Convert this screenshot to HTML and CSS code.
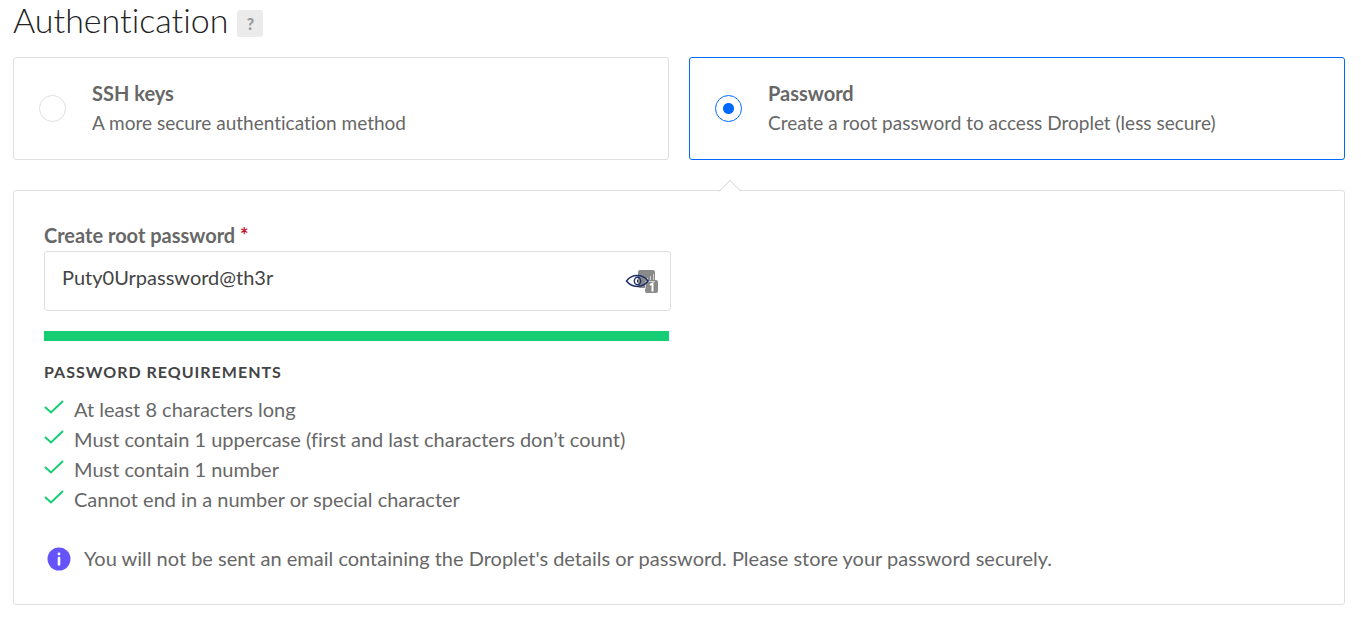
FILE: index.html
```html
<!DOCTYPE html>
<html lang="en">
<head>
<meta charset="utf-8">
<meta name="viewport" content="width=device-width, initial-scale=1">
<title>Authentication</title>
<link rel="stylesheet" href="styles.css">
</head>
<body>
<main class="auth">
  <header class="auth-header">
    <h1 class="auth-title">Authentication</h1>
    <button class="help" type="button" aria-label="Help">?</button>
  </header>

  <div class="methods" role="radiogroup" aria-label="Authentication method">
    <label class="method">
      <input class="method-radio" type="radio" name="method" value="ssh">
      <span class="method-text">
        <strong class="method-name">SSH keys</strong>
        <span class="method-description">A more secure authentication method</span>
      </span>
    </label>
    <label class="method method-selected">
      <input class="method-radio" type="radio" name="method" value="password" checked>
      <span class="method-text">
        <strong class="method-name">Password</strong>
        <span class="method-description">Create a root password to access Droplet (less secure)</span>
      </span>
    </label>
  </div>

  <section class="panel">
    <div class="field">
      <label class="field-label" for="root-password">Create root password <span class="required">*</span></label>
      <div class="field-box">
        <input class="field-input" id="root-password" type="text" value="Puty0Urpassword@th3r" spellcheck="false" autocomplete="off">
        <button class="reveal" type="button" aria-label="Toggle password visibility">
          <svg width="34" height="26" viewBox="0 0 34 26" aria-hidden="true">
            <path fill="#8a8a8a" d="M15 1h13a2 2 0 0 1 2 2v8h1a2 2 0 0 1 2 2v9a2 2 0 0 1-2 2H22a2 2 0 0 1-2-2v-3h-5a2 2 0 0 1-2-2V3a2 2 0 0 1 2-2z"/>
            <path stroke="#fff" stroke-width="1" d="M20.500 12.500V20M20.500 12.500H30M22.500 9v2M25.500 7v4M28.500 5v6" opacity=".6"/>
            <path fill="none" stroke="#fff" stroke-width="2" d="M25 16l2.500-1.500v8"/>
            <path fill="none" stroke="#1d2f6b" stroke-width="1.500" d="M1.500 12C7 4.800 17.500 4.800 23 12C17.500 19.200 7 19.200 1.500 12z"/>
            <ellipse cx="12.500" cy="12" rx="3.200" ry="3.700" fill="none" stroke="#1d2f6b" stroke-width="1.400"/>
            <path stroke="#1d2f6b" d="M12.500 10.500v3"/>
          </svg>
        </button>
      </div>
      <div class="strength" role="img" aria-label="Strong password"></div>
    </div>

    <h2 class="rules-title">Password requirements</h2>
    <ul class="rules">
      <li class="rule"><svg class="check" viewBox="0 0 20 16" aria-hidden="true"><path d="M1 8l6 5.500L19 2"/></svg>At least 8 characters long</li>
      <li class="rule"><svg class="check" viewBox="0 0 20 16" aria-hidden="true"><path d="M1 8l6 5.500L19 2"/></svg>Must contain 1 uppercase (first and last characters don’t count)</li>
      <li class="rule"><svg class="check" viewBox="0 0 20 16" aria-hidden="true"><path d="M1 8l6 5.500L19 2"/></svg>Must contain 1 number</li>
      <li class="rule"><svg class="check" viewBox="0 0 20 16" aria-hidden="true"><path d="M1 8l6 5.500L19 2"/></svg>Cannot end in a number or special character</li>
    </ul>

    <p class="note">
      <svg class="note-icon" viewBox="0 0 24 24" aria-hidden="true">
        <circle cx="12" cy="12" r="11.500" fill="#6554fa"/>
        <circle cx="12" cy="7" r="1.400" fill="#fff"/>
        <path d="M12 11v6.500" stroke="#fff" stroke-width="2.600" stroke-linecap="round"/>
      </svg>
      <span>You will not be sent an email containing the Droplet's details or password. Please store your password securely.</span>
    </p>
  </section>
</main>
</body>
</html>
```
FILE: styles.css
```css
*,
*::before,
*::after {
  box-sizing: border-box;
}

body {
  margin: 0;
  background: #fff;
  color: #676767;
  font-family: Lato, "Open Sans", sans-serif;
  font-size: 20px;
  font-variant-ligatures: none;
  line-height: 30px;
}

.auth {
  padding: 0 16px 15px 13px;
}

.auth-header {
  display: flex;
  align-items: center;
  gap: 9px;
  height: 47px;
  margin-bottom: 10px;
}

.auth-title {
  margin: 0 0 8px;
  color: #222;
  font-size: 34px;
  font-weight: 300;
  line-height: 40px;
}

.help {
  width: 26px;
  height: 27px;
  padding: 0;
  border: 0;
  border-radius: 3px;
  background: #ebebeb;
  color: #999;
  font: inherit;
  font-size: 16px;
  font-weight: 900;
  line-height: 27px;
}

.methods {
  display: grid;
  grid-template-columns: 1fr 1fr;
  gap: 20px;
  margin-bottom: 30px;
}

.method {
  position: relative;
  display: flex;
  align-items: center;
  gap: 26px;
  padding: 20px 25px 21px;
  border: 1px solid #dfdfdf;
  border-radius: 3px;
}

.method-selected {
  border-color: #0069ff;
}

.method-selected::after {
  content: "";
  position: absolute;
  z-index: 1;
  bottom: -40px;
  left: 32px;
  width: 16px;
  height: 16px;
  border: solid #dfdfdf;
  border-width: 1px 0 0 1px;
  background: linear-gradient(135deg, #fff 50%, transparent 50%);
  transform: rotate(45deg);
}

.method-radio {
  flex: none;
  width: 27px;
  height: 27px;
  margin: 0;
  border: 1px solid #dfdfdf;
  border-radius: 50%;
  appearance: none;
}

.method-radio:checked {
  border-color: #0069ff;
  background: radial-gradient(circle, #0069ff 5px, transparent 6px);
}

.method-text {
  display: flex;
  flex-direction: column;
}

.method-name {
  font-weight: 700;
}

.method-description {
  font-size: 19px;
}

.panel {
  padding: 29px 30px 31px;
  border: 1px solid #dfdfdf;
  border-radius: 3px;
}

.field {
  max-width: 627px;
}

.field-label {
  display: block;
  margin-bottom: 1px;
  font-weight: 700;
}

.required {
  color: #c8102e;
}

.field-box {
  display: flex;
  align-items: center;
  height: 60px;
  padding: 0 11px 0 17px;
  border: 1px solid #dfdfdf;
  border-radius: 3px;
}

.field-input {
  flex: 1;
  min-width: 0;
  height: 58px;
  padding: 0 0 8px;
  border: 0;
  outline: 0;
  background: transparent;
  color: #444;
  font: inherit;
}

.reveal {
  display: flex;
  padding: 2px 0 0;
  border: 0;
  background: none;
}

.strength {
  height: 10px;
  margin: 20px 2px 0 0;
  background: #15cd72;
}

.rules-title {
  margin: 16px 0 7px;
  color: #444;
  font-size: 16px;
  font-weight: 700;
  letter-spacing: 1px;
  line-height: 30px;
  text-transform: uppercase;
}

.rules {
  margin: 0 0 29px;
  padding: 0;
  list-style: none;
}

.rule {
  display: flex;
  align-items: flex-start;
  gap: 10px;
}

.check {
  flex: none;
  width: 20px;
  height: 16px;
  margin-top: 5px;
  fill: none;
  stroke: #15cd72;
  stroke-width: 2;
}

.note {
  display: flex;
  align-items: flex-start;
  gap: 13px;
  margin: 0;
  padding-left: 3px;
}

.note-icon {
  flex: none;
  width: 24px;
  height: 24px;
  margin-top: 4px;
}
```
